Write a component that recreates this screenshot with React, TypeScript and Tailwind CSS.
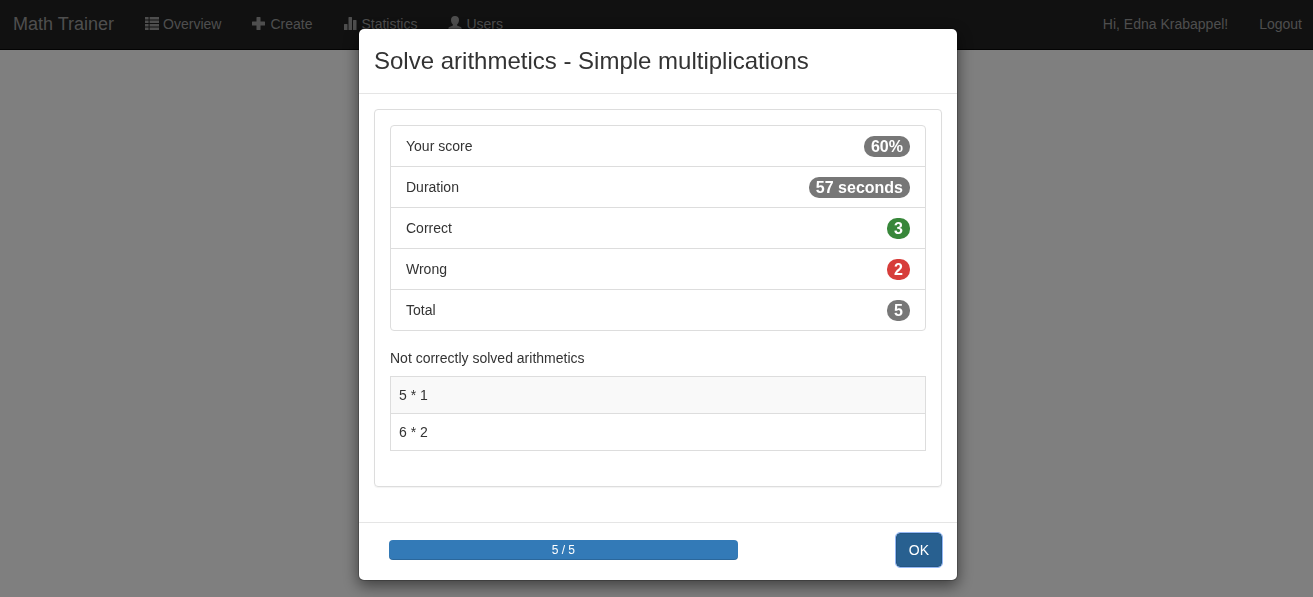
import type { ReactNode } from "react";

function Glyph({ children }: { children: ReactNode }) {
  return (
    <svg viewBox="0 0 14 14" className="mr-1 size-3.5 shrink-0 overflow-visible" fill="currentColor" aria-hidden="true">
      {children}
    </svg>
  );
}

const navItems = [
  {
    label: "Overview",
    icon: (
      <path d="M0 0h3.600v2.600H0zM4.600 0H14v2.600H4.600zM0 3.500h3.600v2.600H0zM4.600 3.500H14v2.600H4.600zM0 7h3.600v2.600H0zM4.600 7H14v2.600H4.600zM0 10.500h3.600v2.600H0zM4.600 10.500H14v2.600H4.600z" />
    ),
  },
  {
    label: "Create",
    icon: (
      <path d="M5 0h3q.5 0 .5.500v4h4q.5 0 .5.500v3q0 .5-.5.500h-4v4q0 .5-.5.500H5q-.5 0-.5-.5v-4h-4Q0 8.500 0 8V5q0-.5.500-.5h4v-4Q4.500 0 5 0z" />
    ),
  },
  {
    label: "Statistics",
    icon: (
      <path d="M1.500 7H4q.5 0 .5.500V13H1V7.500Q1 7 1.500 7zM6 0h2.500q.5 0 .5.500V13H5.500V.500Q5.500 0 6 0zM10.500 3H13q.5 0 .5.500V13H10V3.500q0-.5.500-.5z" />
    ),
  },
  {
    label: "Users",
    icon: (
      <path d="M7-1c2.500 0 4 1.600 4 4 0 1.700-.7 3.300-1.700 4.200-.5.500-.4 1.200.3 1.500l3 1.300c.8.400 1 .9 1 1.600v.900q0 .5-.5.500H.9q-.5 0-.5-.5v-.9c0-.7.2-1.200 1-1.600l3-1.300c.7-.3.8-1 .3-1.500C3.700 6.300 3 4.700 3 3c0-2.400 1.500-4 4-4z" />
    ),
  },
];

const results = [
  { label: "Your score", value: "60%", tone: "bg-[#777777]" },
  { label: "Duration", value: "57 seconds", tone: "bg-[#777777]" },
  { label: "Correct", value: "3", tone: "bg-[#38873a]" },
  { label: "Wrong", value: "2", tone: "bg-[#d73d3a]" },
  { label: "Total", value: "5", tone: "bg-[#777777]" },
];

const mistakes = ["5 * 1", "6 * 2"];

function Navbar() {
  return (
    <nav className="flex h-[50px] items-center border-b border-[#080808] bg-[#222222] pr-[11px] pb-px pl-[13px] text-[#9d9d9d]">
      <a href="#home" className="mr-[31px] text-lg leading-5">
        Math Trainer
      </a>
      <ul className="flex gap-[31px]">
        {navItems.map((item) => (
          <li key={item.label}>
            <a href={"#" + item.label.toLowerCase()} className="flex items-center">
              <Glyph>{item.icon}</Glyph>
              {item.label}
            </a>
          </li>
        ))}
      </ul>
      <div className="ml-auto flex gap-[31px]">
        <span>Hi, Edna Krabappel!</span>
        <a href="#logout">Logout</a>
      </div>
    </nav>
  );
}

function ResultDialog() {
  return (
    <div
      role="dialog"
      aria-modal="true"
      aria-labelledby="dialog-title"
      className="w-full max-w-[600px] rounded-md border border-black/20 bg-white bg-clip-padding shadow-[0_5px_15px_rgba(0,0,0,0.5)]"
    >
      <header className="border-b border-[#e5e5e5] p-[15px]">
        <h1 id="dialog-title" className="text-2xl leading-[34px]">
          Solve arithmetics - Simple multiplications
        </h1>
      </header>

      <div className="p-[15px]">
        <section className="mb-5 rounded border border-[#dddddd] p-[15px] shadow-[0_1px_1px_rgba(0,0,0,0.05)]">
          <ul className="divide-y divide-[#dddddd] rounded border border-[#dddddd]">
            {results.map((row) => (
              <li key={row.label} className="flex items-center justify-between px-[15px] py-2.5">
                <span>{row.label}</span>
                <span
                  className={
                    "-my-px rounded-[10px] px-[7px] py-[3px] text-base leading-[15px] font-bold text-white " + row.tone
                  }
                >
                  {row.value}
                </span>
              </li>
            ))}
          </ul>
          <table className="mt-[9px] mb-5 w-full border-collapse">
            <caption className="py-2 text-left">Not correctly solved arithmetics</caption>
            <tbody>
              {mistakes.map((task) => (
                <tr key={task} className="odd:bg-[#f9f9f9]">
                  <td className="border border-[#dddddd] p-2">{task}</td>
                </tr>
              ))}
            </tbody>
          </table>
        </section>
      </div>

      <footer className="flex items-center justify-between border-t border-[#e5e5e5] px-[15px] pt-2.5 pb-[13px]">
        <div className="w-2/3 px-[15px]">
          <div
            role="progressbar"
            aria-label="Progress"
            aria-valuemin={0}
            aria-valuemax={5}
            aria-valuenow={5}
            className="h-5 rounded bg-[#337ab7] text-center text-xs leading-5 text-white shadow-[inset_0_-1px_0_rgba(0,0,0,0.15)]"
          >
            5 / 5
          </div>
        </div>
        <button
          type="button"
          className="rounded border border-[#245682] bg-[#286090] px-3 py-1.5 leading-5 text-white outline-1 outline-[#94b8f6]"
        >
          OK
        </button>
      </footer>
    </div>
  );
}

export default function App() {
  return (
    <div className="min-h-screen bg-white font-['Liberation_Sans',Arial,sans-serif] text-sm leading-5 text-[#333333]">
      <Navbar />
      <div className="fixed inset-0 bg-black/50" />
      <div className="fixed inset-0 flex items-start justify-center overflow-hidden pt-7 pl-[3px]">
        <ResultDialog />
      </div>
    </div>
  );
}
